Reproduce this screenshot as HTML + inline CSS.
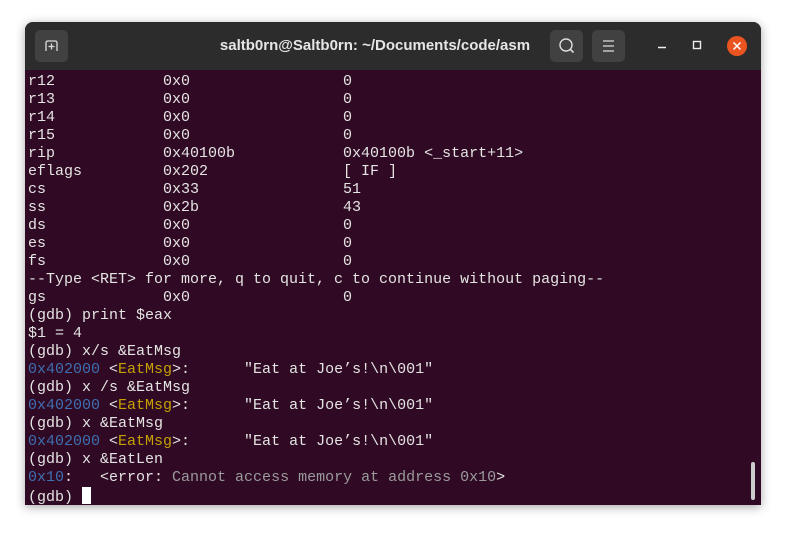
<!DOCTYPE html>
<html><head><style>
body{margin:0;width:786px;height:533px;background:#fff;position:relative;overflow:hidden;}
.win{position:absolute;left:25px;top:22px;width:736px;height:483px;border-radius:8px 8px 0 0;background:#300a24;box-shadow:0 2px 10px rgba(0,0,0,.35);overflow:hidden;}
.tb{position:absolute;left:0;top:0;width:736px;height:48px;background:#2c2c2c;}
.btn{position:absolute;top:8px;width:33px;height:32px;background:#414141;border-radius:5px;}
.title{position:absolute;left:0;width:700px;top:15px;text-align:center;color:#e6e6e6;font:bold 15px "Liberation Sans",sans-serif;}
pre{position:absolute;left:3px;top:51px;margin:0;font:15px/18px "Liberation Mono",monospace;color:#e4e4e2;}
.b{color:#3f6fb0}.y{color:#c4a000}.g{color:#9a9a9a}
.cur{display:inline-block;width:9px;height:17px;background:#fff;vertical-align:-3px}
</style></head><body>
<div class="win">
<div class="tb">
<div class="btn" style="left:10px"><svg width="33" height="32"><path d="M11 21V13Q11 11 13 11H20Q22 11 22 13V21" stroke="#ddd" fill="none" stroke-width="1.3"/><path d="M16.5 13.5v6M13.5 16.5h6" stroke="#ddd" stroke-width="1.3"/></svg></div>
<div class="title">saltb0rn@Saltb0rn: ~/Documents/code/asm</div>
<div class="btn" style="left:525px"><svg width="33" height="32"><circle cx="16" cy="15" r="6" stroke="#ddd" fill="none" stroke-width="1.4"/><path d="M20 19l3.5 3.5" stroke="#ddd" stroke-width="1.6"/></svg></div>
<div class="btn" style="left:567px"><svg width="33" height="32"><path d="M11 11h11M11 16h11M11 21h11" stroke="#ddd" stroke-width="1.3"/></svg></div>
<svg style="position:absolute;left:620px;top:0" width="116" height="48"><path d="M13 25.5h8" stroke="#eee" stroke-width="1.4"/><rect x="48.5" y="19.5" width="7" height="7" stroke="#eee" fill="none" stroke-width="1.4"/><circle cx="92" cy="24" r="10" fill="#e95420"/><path d="M88.5 20.5l7 7M95.5 20.5l-7 7" stroke="#fff" stroke-width="1.5"/></svg>
</div>
<pre>r12            0x0                 0
r13            0x0                 0
r14            0x0                 0
r15            0x0                 0
rip            0x40100b            0x40100b &lt;_start+11&gt;
eflags         0x202               [ IF ]
cs             0x33                51
ss             0x2b                43
ds             0x0                 0
es             0x0                 0
fs             0x0                 0
--Type &lt;RET&gt; for more, q to quit, c to continue without paging--
gs             0x0                 0
(gdb) print $eax
$1 = 4
(gdb) x/s &amp;EatMsg
<span class="b">0x402000</span> &lt;<span class="y">EatMsg</span>&gt;:      "Eat at Joe’s!\n\001"
(gdb) x /s &amp;EatMsg
<span class="b">0x402000</span> &lt;<span class="y">EatMsg</span>&gt;:      "Eat at Joe’s!\n\001"
(gdb) x &amp;EatMsg
<span class="b">0x402000</span> &lt;<span class="y">EatMsg</span>&gt;:      "Eat at Joe’s!\n\001"
(gdb) x &amp;EatLen
<span class="b">0x10</span>:   &lt;error: <span class="g">Cannot access memory at address 0x10</span>&gt;
(gdb) <span class="cur"></span></pre>
<div style="position:absolute;left:726px;top:440px;width:4px;height:38px;background:#ccc;border-radius:2px"></div>
</div>
</body></html>
